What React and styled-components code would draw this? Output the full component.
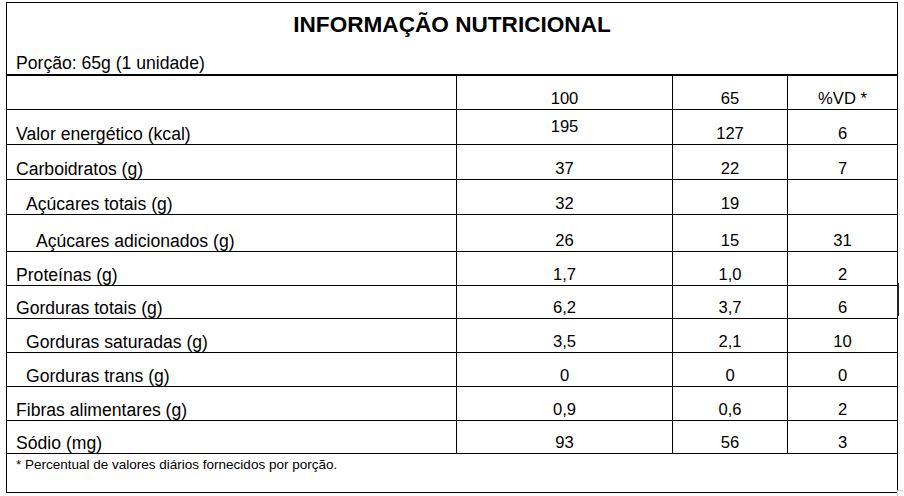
import styled, { createGlobalStyle } from "styled-components";

const GlobalStyle = createGlobalStyle`
  html, body {
    margin: 0;
    padding: 0;
    background: #fff;
  }
  body {
    font-family: "Liberation Sans", Arial, sans-serif;
    color: #000;
  }
`;

const Page = styled.div`
  padding: 2px 0 0 6px;
  position: relative;
  width: 904px;
  height: 496px;
  box-sizing: border-box;
`;

const Table = styled.table`
  width: 891px;
  border-collapse: collapse;
  table-layout: fixed;
  border: 1px solid #000;
`;

const HeadCell = styled.td`
  padding: 9px 9px 1px;
  border-bottom: 2px solid #000;
`;

const Title = styled.div`
  text-align: center;
  font-weight: bold;
  font-size: 22.6px;
  line-height: 25px;
  margin-bottom: 16px;
`;

const Portion = styled.div`
  font-size: 17.6px;
  line-height: 20px;
`;

const Label = styled.td`
  height: ${({ $h }) => $h - 1}px;
  padding: 0 0 0 ${({ $level }) => 9 + $level * 10}px;
  border: 1px solid #000;
  font-size: 17.6px;
  line-height: 20px;
  vertical-align: bottom;
  white-space: nowrap;
`;

const Value = styled.td`
  padding: 0;
  border: 1px solid #000;
  text-align: center;
  font-size: 16.6px;
  line-height: 20px;
  vertical-align: ${({ $mid }) => ($mid ? "middle" : "bottom")};
`;

const FootCell = styled.td`
  height: 35px;
  padding: 3px 9px 0;
  border: 1px solid #000;
  font-size: 13.5px;
  line-height: 16px;
  vertical-align: top;
`;

const Handle = styled.div`
  position: absolute;
  left: 897px;
  top: 283px;
  width: 2px;
  height: 33px;
  background: #222;
`;

const Corner = styled.div`
  position: absolute;
  left: 897px;
  top: 490px;
  width: 5px;
  height: 5px;
  border-left: 1px solid #c8c8c8;
  border-top: 1px solid #c8c8c8;
`;

const rows = [
  { label: "", level: 0, v: ["100", "65", "%VD *"], h: 34 },
  { label: "Valor energético (kcal)", level: 0, v: ["195", "127", "6"], h: 35, mid: 0 },
  { label: "Carboidratos (g)", level: 0, v: ["37", "22", "7"], h: 35 },
  { label: "Açúcares totais (g)", level: 1, v: ["32", "19", ""], h: 35 },
  { label: "Açúcares adicionados (g)", level: 2, v: ["26", "15", "31"], h: 37 },
  { label: "Proteínas (g)", level: 0, v: ["1,7", "1,0", "2"], h: 34 },
  { label: "Gorduras totais (g)", level: 0, v: ["6,2", "3,7", "6"], h: 33 },
  { label: "Gorduras saturadas (g)", level: 1, v: ["3,5", "2,1", "10"], h: 34 },
  { label: "Gorduras trans (g)", level: 1, v: ["0", "0", "0"], h: 34 },
  { label: "Fibras alimentares (g)", level: 0, v: ["0,9", "0,6", "2"], h: 34 },
  { label: "Sódio (mg)", level: 0, v: ["93", "56", "3"], h: 33 },
];

export default function App() {
  return (
    <Page>
      <GlobalStyle />
      <Table>
        <colgroup>
          <col style={{ width: 450 }} />
          <col style={{ width: 216 }} />
          <col style={{ width: 115 }} />
          <col style={{ width: 110 }} />
        </colgroup>
        <tbody>
          <tr>
            <HeadCell colSpan={4}>
              <Title>INFORMAÇÃO NUTRICIONAL</Title>
              <Portion>Porção: 65g (1 unidade)</Portion>
            </HeadCell>
          </tr>
          {rows.map((r, i) => (
            <tr key={i}>
              <Label $h={r.h} $level={r.level}>{r.label}</Label>
              {r.v.map((val, j) => (
                <Value key={j} $mid={r.mid === j}>{val}</Value>
              ))}
            </tr>
          ))}
          <tr>
            <FootCell colSpan={4}>* Percentual de valores diários fornecidos por porção.</FootCell>
          </tr>
        </tbody>
      </Table>
      <Handle />
      <Corner />
    </Page>
  );
}
